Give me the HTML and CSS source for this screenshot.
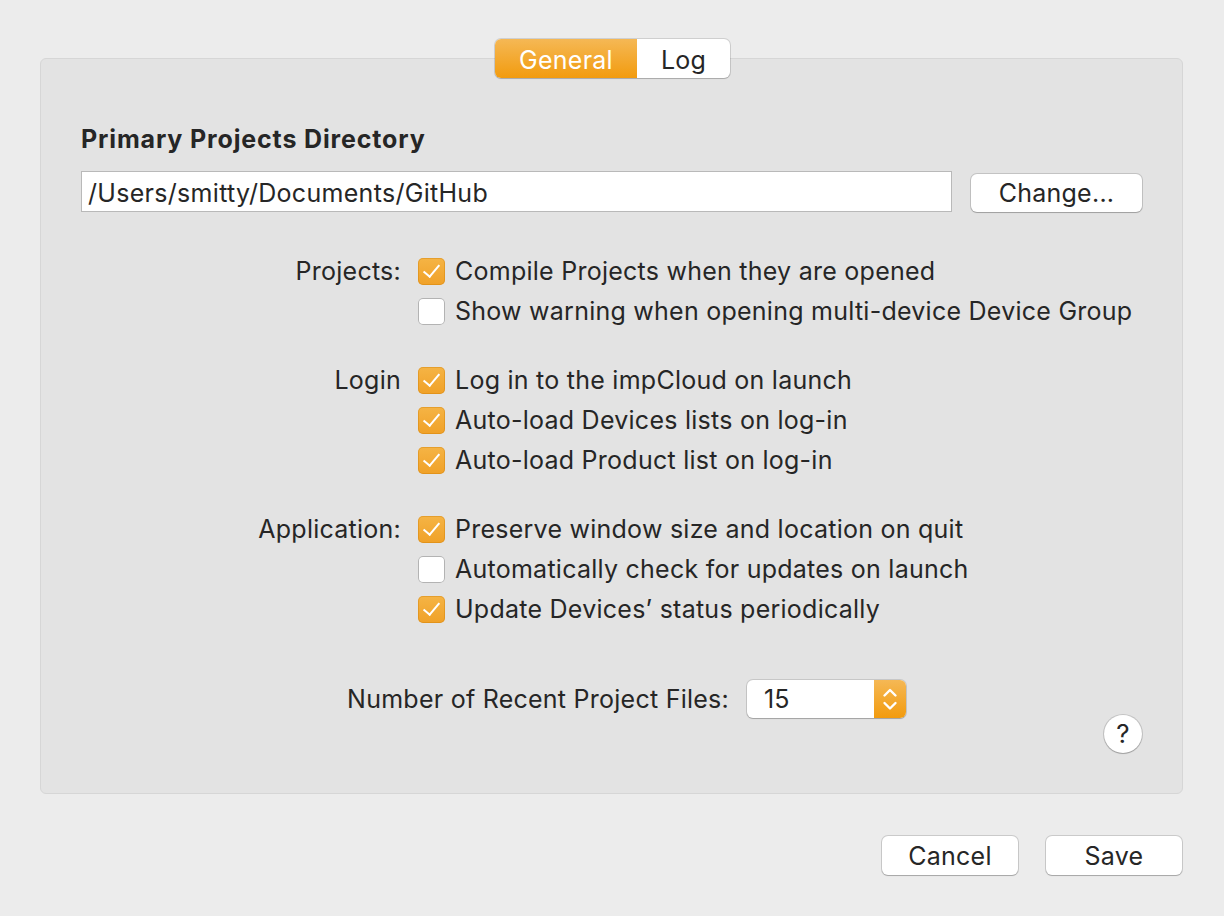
FILE: index.html
```html
<!DOCTYPE html>
<html>
<head>
<meta charset="utf-8">
<link rel="stylesheet" href="styles.css">
</head>
<body>
<div class="window">
  <div class="tabbar">
    <div class="tabs">
      <div class="tab active">General</div>
      <div class="tab">Log</div>
    </div>
  </div>
  <div class="panel">
    <h1 class="heading">Primary Projects Directory</h1>
    <div class="dir-row">
      <div class="field">/Users/smitty/Documents/GitHub</div>
      <button class="btn change">Change...</button>
    </div>

    <div class="group g1">
      <div class="label">Projects:</div>
      <div class="options">
        <div class="opt"><span class="cb on"></span><span>Compile Projects when they are opened</span></div>
        <div class="opt"><span class="cb"></span><span>Show warning when opening multi-device Device Group</span></div>
      </div>
    </div>

    <div class="group">
      <div class="label">Login</div>
      <div class="options">
        <div class="opt"><span class="cb on"></span><span>Log in to the impCloud on launch</span></div>
        <div class="opt"><span class="cb on"></span><span>Auto-load Devices lists on log-in</span></div>
        <div class="opt"><span class="cb on"></span><span>Auto-load Product list on log-in</span></div>
      </div>
    </div>

    <div class="group">
      <div class="label">Application:</div>
      <div class="options">
        <div class="opt"><span class="cb on"></span><span>Preserve window size and location on quit</span></div>
        <div class="opt"><span class="cb"></span><span>Automatically check for updates on launch</span></div>
        <div class="opt"><span class="cb on"></span><span>Update Devices’ status periodically</span></div>
      </div>
    </div>

    <div class="recent">
      <div class="recent-label">Number of Recent Project Files:</div>
      <div class="popup">
        <div class="popup-value">15</div>
        <div class="popup-arrows">
          <svg width="32" height="38" viewBox="0 0 32 38">
            <path d="M10.5 15.5 L16 10 L21.5 15.5" fill="none" stroke="#fff" stroke-width="2.4" stroke-linecap="round" stroke-linejoin="round"/>
            <path d="M10.5 23 L16 28.5 L21.5 23" fill="none" stroke="#fff" stroke-width="2.4" stroke-linecap="round" stroke-linejoin="round"/>
          </svg>
        </div>
      </div>
    </div>

    <div class="help-row">
      <button class="help">?</button>
    </div>
  </div>

  <div class="footer">
    <button class="btn foot">Cancel</button>
    <button class="btn foot">Save</button>
  </div>
</div>
</body>
</html>
```

FILE: styles.css
```css
* { box-sizing: border-box; }
html, body { margin: 0; padding: 0; }
body {
  background: #ececec;
  font-family: Inter, "Noto Sans", sans-serif;
  color: #262626;
  width: 1224px;
  height: 916px;
  overflow: hidden;
}
.window {
  padding: 39px 41px 0 40px;
}
.tabbar {
  display: flex;
  justify-content: center;
  position: relative;
  z-index: 2;
  height: 39px;
  margin-bottom: -20px;
  padding-left: 2px;
}
.tabs {
  display: flex;
  height: 39px;
  border-radius: 6px;
  background: #fff;
  box-shadow: 0 0 0 1px rgba(0,0,0,0.12), 0 1px 1px rgba(0,0,0,0.15);
  overflow: hidden;
}
.tab {
  font-size: 25px;
  letter-spacing: 0.25px;
  line-height: 39px;
  padding-top: 2px;
  text-align: center;
  width: 93px;
  color: #262626;
}
.tab.active {
  width: 142px;
  color: #fff;
  background: linear-gradient(#f5b855, #f29b0e);
}
.panel {
  background: #e3e3e3;
  border: 1px solid #d6d6d6;
  border-radius: 6px;
  height: 736px;
  padding: 66px 40px 0 40px;
}
.heading {
  margin: 0;
  font-size: 25px;
  font-weight: 700;
  line-height: 28px;
  color: #262626;
  letter-spacing: 0.85px;
}
.dir-row {
  display: flex;
  align-items: center;
  margin-top: 18px;
  gap: 19px;
}
.field {
  width: 871px;
  height: 41px;
  background: #fff;
  border: 1px solid #b9b9b9;
  font-size: 25px;
  letter-spacing: 0.3px;
  line-height: 37px;
  padding-top: 3px;
  padding-left: 6px;
  color: #262626;
}
.btn {
  font-family: Inter, "Noto Sans", sans-serif;
  background: #fff;
  border: none;
  border-radius: 6px;
  box-shadow: 0 0 0 1px rgba(0,0,0,0.14), 0 1px 1px rgba(0,0,0,0.18);
  font-size: 25px;
  letter-spacing: 0.25px;
  color: #262626;
  padding: 0;
  margin: 0;
}
.change {
  width: 171px;
  height: 38px;
  margin-top: 3px;
}
.group {
  display: flex;
  margin-top: 29px;
}
.group.g1 { margin-top: 39px; }
.label {
  width: 320px;
  text-align: right;
  font-size: 25px;
  letter-spacing: 0.25px;
  line-height: 40px;
}
.options {
  margin-left: 17px;
  display: flex;
  flex-direction: column;
}
.opt {
  display: flex;
  align-items: center;
  height: 40px;
  font-size: 25px;
  letter-spacing: 0.25px;
  gap: 10px;
}
.cb {
  width: 27px;
  height: 27px;
  border-radius: 5px;
  background: #fff;
  box-shadow: inset 0 0 0 1px #b3b3b3;
  flex: none;
  position: relative;
}
.cb.on {
  background: linear-gradient(#f5b445, #f0a128);
  box-shadow: inset 0 0 0 1px rgba(200,120,0,0.35);
}
.cb.on::after {
  content: "";
  position: absolute;
  left: 9px;
  top: 3px;
  width: 7px;
  height: 14px;
  border-right: 2.4px solid #fff;
  border-bottom: 2.4px solid #fff;
  transform: rotate(40deg);
}
.recent {
  display: flex;
  align-items: center;
  margin-top: 51px;
  gap: 18px;
}
.recent-label {
  width: 648px;
  text-align: right;
  font-size: 25px;
  letter-spacing: 0.25px;
}
.popup {
  display: flex;
  width: 159px;
  height: 38px;
  border-radius: 6px;
  overflow: hidden;
  background: #fff;
  box-shadow: 0 0 0 1px rgba(0,0,0,0.12), 0 1px 1px rgba(0,0,0,0.18);
}
.popup-value {
  flex: 1;
  font-size: 25px;
  line-height: 38px;
  padding-left: 17px;
}
.popup-arrows {
  width: 32px;
  height: 38px;
  background: linear-gradient(#f5b855, #f29b0e);
}
.popup-arrows svg { display: block; }
.help-row {
  display: flex;
  justify-content: flex-end;
  margin-top: -3px;
}
.help {
  width: 38px;
  height: 38px;
  border-radius: 50%;
  background: #fff;
  border: none;
  box-shadow: 0 0 0 1px rgba(0,0,0,0.14), 0 1px 1px rgba(0,0,0,0.18);
  font-family: Inter, "Noto Sans", sans-serif;
  font-size: 26px;
  font-weight: 400;
  color: #262626;
  padding: 0;
  line-height: 38px;
}
.footer {
  display: flex;
  justify-content: flex-end;
  gap: 28px;
  margin-top: 42px;
  padding-right: 1px;
}
.foot {
  width: 136px;
  height: 39px;
}
```
